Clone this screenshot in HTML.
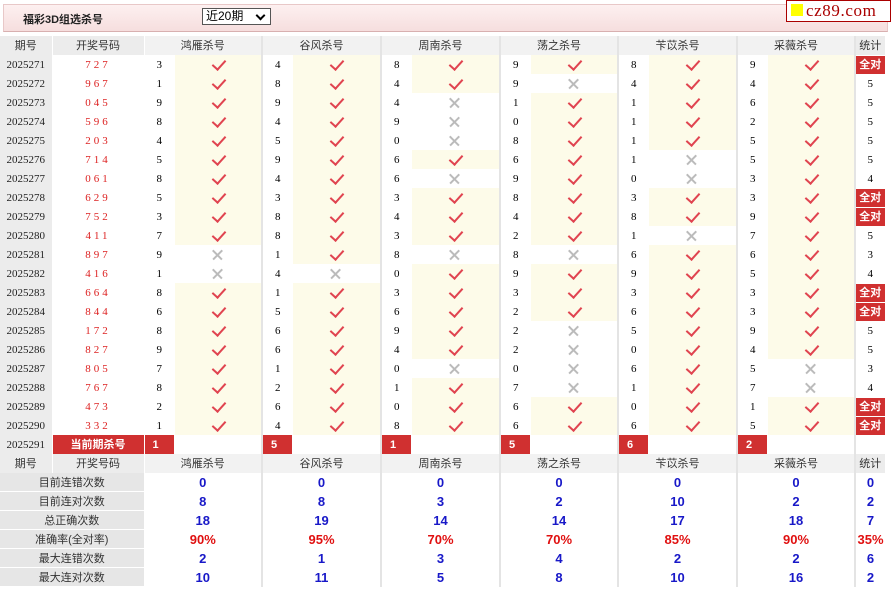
<!DOCTYPE html>
<html><head><meta charset="utf-8"><style>
body{margin:0;background:#fff;font-family:"Liberation Serif","Noto Serif CJK SC",serif;font-size:11px;color:#000;width:892px;height:590px;overflow:hidden;position:relative}
.top{position:absolute;left:3px;top:4px;width:883px;height:26px;background:linear-gradient(#fdf0f0,#f6dede);border:1px solid #e8c8c8;border-bottom:1px solid #d8b0b0}
.title{position:absolute;left:19px;top:6px;font-family:"Liberation Sans","Noto Sans CJK SC",sans-serif;font-weight:bold;font-size:11px;color:#222}
.sel{position:absolute;left:198px;top:3px;width:64px;height:15px;border:1px solid #555;background:#fff;font-family:"Liberation Sans","Noto Sans CJK SC",sans-serif;font-size:12px;line-height:15px;padding-left:3px;box-sizing:content-box}
.sel:after{content:"";position:absolute;right:6px;top:3px;width:5px;height:5px;border-right:2px solid #000;border-bottom:2px solid #000;transform:rotate(45deg)}
.logo{position:absolute;left:786px;top:0;width:103px;height:20px;border:1px solid #a00;background:#fff;font-family:"Liberation Serif",serif;font-size:17px;line-height:20px;color:#a00;letter-spacing:0.6px}
.logo i{display:inline-block;width:12px;height:12px;background:#ff0;margin:0 3px 0 4px}
table{position:absolute;left:0;top:36px;border-collapse:collapse;table-layout:fixed;width:885px}
td{height:19px;line-height:18px;padding:0;text-align:center;border:0;border-right:1px solid #fff;white-space:nowrap;overflow:hidden;font-family:"Liberation Serif","Noto Sans CJK SC",serif}
tr{height:19px}
.h td{background:#ececec;font-family:"Liberation Sans","Noto Sans CJK SC",sans-serif;color:#333}
.h td.g{background:#f2f2f2;border-right:2px solid #e4e4e4}
.p{background:#ececec;color:#222}
.d{color:#d22;letter-spacing:3px}
.n{text-align:left;padding-left:12px}
.c,.x{border-right:2px solid #e4e4e4;position:relative}
.c{background:#fdfbe9}
.c:before{content:"";position:absolute;left:50%;top:2px;margin-left:-3px;width:6px;height:11px;border-right:2px solid #e04450;border-bottom:2px solid #e04450;transform:rotate(42deg)}
.x:before,.x:after{content:"";position:absolute;left:50%;top:50%;width:13px;height:1.5px;margin:-1px 0 0 -7px;background:#bbb;transform:rotate(45deg)}
.x:after{transform:rotate(-45deg)}
.s b{display:block;background:#d03030;color:#fff;font-family:"Liberation Sans","Noto Sans CJK SC",sans-serif;font-size:11px;line-height:18px}
.cur td.r{background:#d03030;color:#fff;font-weight:bold;font-family:"Liberation Sans","Noto Sans CJK SC",sans-serif}
.cur td.r.n{padding-left:8px}
.cur td.w{border-right:2px solid #e4e4e4}
.st td{font-family:"Liberation Sans",sans-serif;font-weight:bold;font-size:13px;line-height:18px;color:#1818c8;border-right:2px solid #e4e4e4}
.st td.l{background:#e6e6e6;color:#333;font-weight:normal;font-size:11px;font-family:"Liberation Sans","Noto Sans CJK SC",sans-serif;border-right:1px solid #fff;box-shadow:inset 0 -1px 0 #fff}
.st td.rd{color:#e01010}
.st td.sv{border-right:0}
</style></head><body>
<div class="top"><div class="title">福彩3D组选杀号</div><div class="sel">近20期</div></div>
<div class="logo"><i></i>cz89.com</div>
<table>
<colgroup><col style="width:52px"><col style="width:92px"><col style="width:30px"><col style="width:88px"><col style="width:30px"><col style="width:89px"><col style="width:30px"><col style="width:89px"><col style="width:30px"><col style="width:88px"><col style="width:30px"><col style="width:89px"><col style="width:30px"><col style="width:88px"><col style="width:30px"></colgroup>
<tr class="h"><td>期号</td><td>开奖号码</td><td class="g" colspan="2">鸿雁杀号</td><td class="g" colspan="2">谷风杀号</td><td class="g" colspan="2">周南杀号</td><td class="g" colspan="2">荡之杀号</td><td class="g" colspan="2">苄苡杀号</td><td class="g" colspan="2">采薇杀号</td><td>统计</td></tr>
<tr><td class="p">2025271</td><td class="d">727</td><td class="n">3</td><td class="c"></td><td class="n">4</td><td class="c"></td><td class="n">8</td><td class="c"></td><td class="n">9</td><td class="c"></td><td class="n">8</td><td class="c"></td><td class="n">9</td><td class="c"></td><td class="s"><b>全对</b></td></tr>
<tr><td class="p">2025272</td><td class="d">967</td><td class="n">1</td><td class="c"></td><td class="n">8</td><td class="c"></td><td class="n">4</td><td class="c"></td><td class="n">9</td><td class="x"></td><td class="n">4</td><td class="c"></td><td class="n">4</td><td class="c"></td><td>5</td></tr>
<tr><td class="p">2025273</td><td class="d">045</td><td class="n">9</td><td class="c"></td><td class="n">9</td><td class="c"></td><td class="n">4</td><td class="x"></td><td class="n">1</td><td class="c"></td><td class="n">1</td><td class="c"></td><td class="n">6</td><td class="c"></td><td>5</td></tr>
<tr><td class="p">2025274</td><td class="d">596</td><td class="n">8</td><td class="c"></td><td class="n">4</td><td class="c"></td><td class="n">9</td><td class="x"></td><td class="n">0</td><td class="c"></td><td class="n">1</td><td class="c"></td><td class="n">2</td><td class="c"></td><td>5</td></tr>
<tr><td class="p">2025275</td><td class="d">203</td><td class="n">4</td><td class="c"></td><td class="n">5</td><td class="c"></td><td class="n">0</td><td class="x"></td><td class="n">8</td><td class="c"></td><td class="n">1</td><td class="c"></td><td class="n">5</td><td class="c"></td><td>5</td></tr>
<tr><td class="p">2025276</td><td class="d">714</td><td class="n">5</td><td class="c"></td><td class="n">9</td><td class="c"></td><td class="n">6</td><td class="c"></td><td class="n">6</td><td class="c"></td><td class="n">1</td><td class="x"></td><td class="n">5</td><td class="c"></td><td>5</td></tr>
<tr><td class="p">2025277</td><td class="d">061</td><td class="n">8</td><td class="c"></td><td class="n">4</td><td class="c"></td><td class="n">6</td><td class="x"></td><td class="n">9</td><td class="c"></td><td class="n">0</td><td class="x"></td><td class="n">3</td><td class="c"></td><td>4</td></tr>
<tr><td class="p">2025278</td><td class="d">629</td><td class="n">5</td><td class="c"></td><td class="n">3</td><td class="c"></td><td class="n">3</td><td class="c"></td><td class="n">8</td><td class="c"></td><td class="n">3</td><td class="c"></td><td class="n">3</td><td class="c"></td><td class="s"><b>全对</b></td></tr>
<tr><td class="p">2025279</td><td class="d">752</td><td class="n">3</td><td class="c"></td><td class="n">8</td><td class="c"></td><td class="n">4</td><td class="c"></td><td class="n">4</td><td class="c"></td><td class="n">8</td><td class="c"></td><td class="n">9</td><td class="c"></td><td class="s"><b>全对</b></td></tr>
<tr><td class="p">2025280</td><td class="d">411</td><td class="n">7</td><td class="c"></td><td class="n">8</td><td class="c"></td><td class="n">3</td><td class="c"></td><td class="n">2</td><td class="c"></td><td class="n">1</td><td class="x"></td><td class="n">7</td><td class="c"></td><td>5</td></tr>
<tr><td class="p">2025281</td><td class="d">897</td><td class="n">9</td><td class="x"></td><td class="n">1</td><td class="c"></td><td class="n">8</td><td class="x"></td><td class="n">8</td><td class="x"></td><td class="n">6</td><td class="c"></td><td class="n">6</td><td class="c"></td><td>3</td></tr>
<tr><td class="p">2025282</td><td class="d">416</td><td class="n">1</td><td class="x"></td><td class="n">4</td><td class="x"></td><td class="n">0</td><td class="c"></td><td class="n">9</td><td class="c"></td><td class="n">9</td><td class="c"></td><td class="n">5</td><td class="c"></td><td>4</td></tr>
<tr><td class="p">2025283</td><td class="d">664</td><td class="n">8</td><td class="c"></td><td class="n">1</td><td class="c"></td><td class="n">3</td><td class="c"></td><td class="n">3</td><td class="c"></td><td class="n">3</td><td class="c"></td><td class="n">3</td><td class="c"></td><td class="s"><b>全对</b></td></tr>
<tr><td class="p">2025284</td><td class="d">844</td><td class="n">6</td><td class="c"></td><td class="n">5</td><td class="c"></td><td class="n">6</td><td class="c"></td><td class="n">2</td><td class="c"></td><td class="n">6</td><td class="c"></td><td class="n">3</td><td class="c"></td><td class="s"><b>全对</b></td></tr>
<tr><td class="p">2025285</td><td class="d">172</td><td class="n">8</td><td class="c"></td><td class="n">6</td><td class="c"></td><td class="n">9</td><td class="c"></td><td class="n">2</td><td class="x"></td><td class="n">5</td><td class="c"></td><td class="n">9</td><td class="c"></td><td>5</td></tr>
<tr><td class="p">2025286</td><td class="d">827</td><td class="n">9</td><td class="c"></td><td class="n">6</td><td class="c"></td><td class="n">4</td><td class="c"></td><td class="n">2</td><td class="x"></td><td class="n">0</td><td class="c"></td><td class="n">4</td><td class="c"></td><td>5</td></tr>
<tr><td class="p">2025287</td><td class="d">805</td><td class="n">7</td><td class="c"></td><td class="n">1</td><td class="c"></td><td class="n">0</td><td class="x"></td><td class="n">0</td><td class="x"></td><td class="n">6</td><td class="c"></td><td class="n">5</td><td class="x"></td><td>3</td></tr>
<tr><td class="p">2025288</td><td class="d">767</td><td class="n">8</td><td class="c"></td><td class="n">2</td><td class="c"></td><td class="n">1</td><td class="c"></td><td class="n">7</td><td class="x"></td><td class="n">1</td><td class="c"></td><td class="n">7</td><td class="x"></td><td>4</td></tr>
<tr><td class="p">2025289</td><td class="d">473</td><td class="n">2</td><td class="c"></td><td class="n">6</td><td class="c"></td><td class="n">0</td><td class="c"></td><td class="n">6</td><td class="c"></td><td class="n">0</td><td class="c"></td><td class="n">1</td><td class="c"></td><td class="s"><b>全对</b></td></tr>
<tr><td class="p">2025290</td><td class="d">332</td><td class="n">1</td><td class="c"></td><td class="n">4</td><td class="c"></td><td class="n">8</td><td class="c"></td><td class="n">6</td><td class="c"></td><td class="n">6</td><td class="c"></td><td class="n">5</td><td class="c"></td><td class="s"><b>全对</b></td></tr>
<tr class="cur"><td class="p">2025291</td><td class="r">当前期杀号</td><td class="r n">1</td><td class="w"></td><td class="r n">5</td><td class="w"></td><td class="r n">1</td><td class="w"></td><td class="r n">5</td><td class="w"></td><td class="r n">6</td><td class="w"></td><td class="r n">2</td><td class="w"></td><td></td></tr>
<tr class="h"><td>期号</td><td>开奖号码</td><td class="g" colspan="2">鸿雁杀号</td><td class="g" colspan="2">谷风杀号</td><td class="g" colspan="2">周南杀号</td><td class="g" colspan="2">荡之杀号</td><td class="g" colspan="2">苄苡杀号</td><td class="g" colspan="2">采薇杀号</td><td>统计</td></tr>
<tr class="st"><td class="l" colspan="2">目前连错次数</td><td colspan="2">0</td><td colspan="2">0</td><td colspan="2">0</td><td colspan="2">0</td><td colspan="2">0</td><td colspan="2">0</td><td class="sv">0</td></tr>
<tr class="st"><td class="l" colspan="2">目前连对次数</td><td colspan="2">8</td><td colspan="2">8</td><td colspan="2">3</td><td colspan="2">2</td><td colspan="2">10</td><td colspan="2">2</td><td class="sv">2</td></tr>
<tr class="st"><td class="l" colspan="2">总正确次数</td><td colspan="2">18</td><td colspan="2">19</td><td colspan="2">14</td><td colspan="2">14</td><td colspan="2">17</td><td colspan="2">18</td><td class="sv">7</td></tr>
<tr class="st"><td class="l" colspan="2">准确率(全对率)</td><td class="rd" colspan="2">90%</td><td class="rd" colspan="2">95%</td><td class="rd" colspan="2">70%</td><td class="rd" colspan="2">70%</td><td class="rd" colspan="2">85%</td><td class="rd" colspan="2">90%</td><td class="rd sv">35%</td></tr>
<tr class="st"><td class="l" colspan="2">最大连错次数</td><td colspan="2">2</td><td colspan="2">1</td><td colspan="2">3</td><td colspan="2">4</td><td colspan="2">2</td><td colspan="2">2</td><td class="sv">6</td></tr>
<tr class="st"><td class="l" colspan="2">最大连对次数</td><td colspan="2">10</td><td colspan="2">11</td><td colspan="2">5</td><td colspan="2">8</td><td colspan="2">10</td><td colspan="2">16</td><td class="sv">2</td></tr>
</table>
</body></html>
